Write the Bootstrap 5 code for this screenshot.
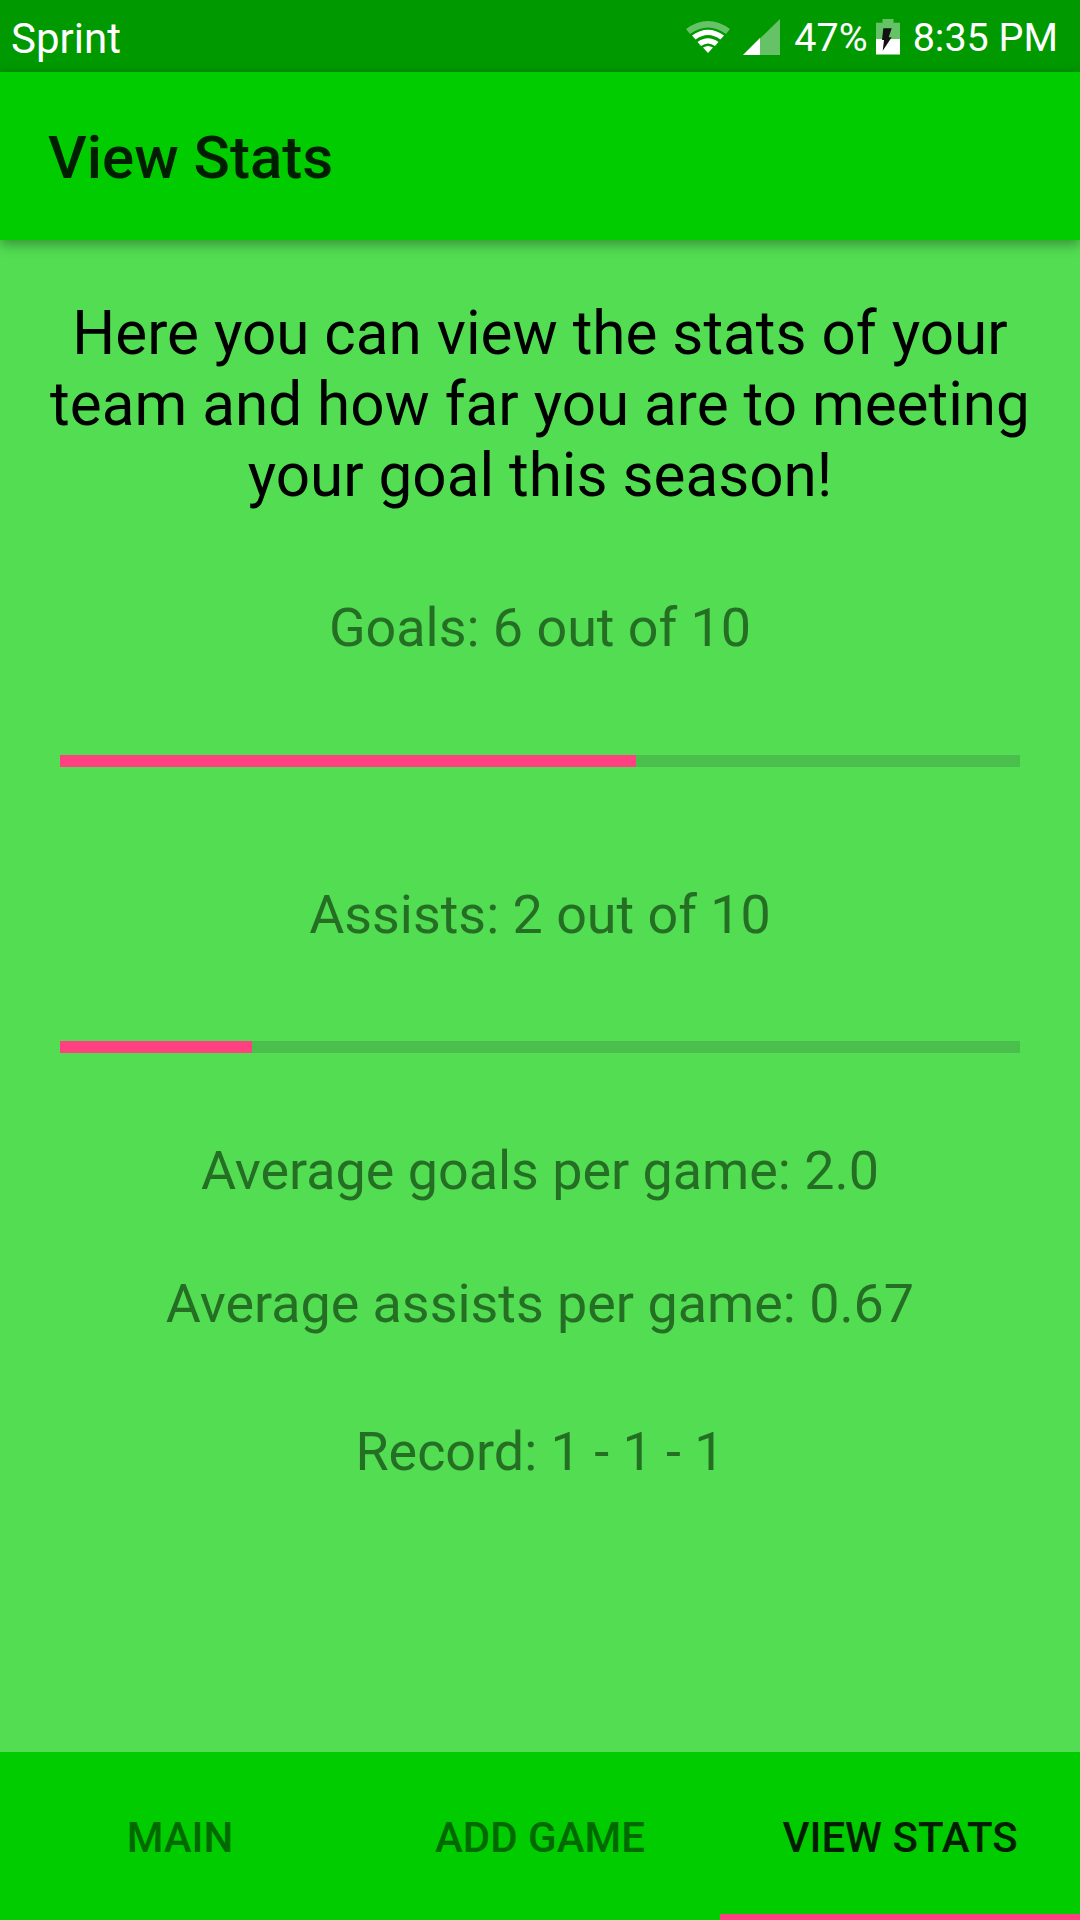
<!DOCTYPE html>
<html lang="en">
<head>
  <meta charset="UTF-8" />
  <meta name="viewport" content="width=device-width, initial-scale=1" />
  <title>View Stats</title>
  <link href="https://cdn.jsdelivr.net/npm/bootstrap@5.3.0/dist/css/bootstrap.min.css" rel="stylesheet">
  <style>
    body {
      background: #52dd52;
      font-family: Roboto, sans-serif;
      height: 1920px;
      overflow: hidden;
    }

    .status-bar {
      height: 72px;
      background: #009900;
      color: #fff;
      padding: 4px 22px 0 11px;
    }

    .carrier {
      font-size: 42px;
    }

    .status-right {
      font-size: 39.5px;
    }

    .wifi-icon { margin-right: 13px; margin-top: -3px; }
    .signal-icon { margin-right: 14px; margin-top: -3px; }
    .battery-icon { margin: -3px 13px 0 8px; }

    .app-bar {
      height: 168px;
      background: #00cc00;
      color: #001f00;
      font-size: 60px;
      font-weight: 500;
      padding: 4px 0 0 48px;
      box-shadow: 0 4px 12px rgba(0, 0, 0, 0.35);
      position: relative;
    }

    .stats-body {
      flex: 1;
      padding-top: 58px;
    }

    .intro-text {
      font-size: 60.2px;
      line-height: 71px;
      color: #000;
      margin: 0 0 85px;
      padding: 0 30px;
    }

    .stat-text {
      font-size: 53.85px;
      line-height: 64px;
      color: #256f25;
      margin: 0;
    }

    .stat-bar {
      height: 12px;
      margin: 95px 60px 0;
      background: #4bbf4b;
      border-radius: 0;
    }

    .stat-bar .progress-bar {
      background: #ff4081;
    }

    .stat-bar-second { margin-top: 94px; }
    .stat-second { margin-top: 116px; }
    .stat-avg { margin-top: 86px; }
    .stat-avg2 { margin-top: 69px; }
    .stat-rec { margin-top: 84px; }

    .tab-bar {
      height: 168px;
      background: #00cc00;
    }

    .tab-item {
      width: 360px;
      font-size: 42px;
      font-weight: 500;
      color: #006a00;
      padding-top: 2px;
    }

    .tab-active {
      color: #001f00;
      border-bottom: 6px solid #ff4081;
      padding-top: 8px;
    }
  </style>
</head>
<body class="d-flex flex-column">

  <div class="status-bar d-flex justify-content-between align-items-center">
    <span class="carrier">Sprint</span>
    <div class="status-right d-flex align-items-center">
      <svg class="wifi-icon" width="44" height="34" viewBox="0 0 44 34">
        <path d="M0 9 Q22 -7 44 9 L40 14 Q22 1 4 14Z" fill="#fff" opacity=".4"/>
        <path d="M6 15.500 Q22 4 38 15.500 L34.500 19.500 Q22 10.500 9.500 19.500Z" fill="#fff"/>
        <path d="M11.500 22 Q22 14.500 32.500 22 L29 26 Q22 21 15 26Z" fill="#fff"/>
        <path d="M17 27.500 Q22 24.500 27 27.500 L22 33Z" fill="#fff"/>
      </svg>
      <svg class="signal-icon" width="37" height="36" viewBox="0 0 37 36">
        <path d="M37 0V36H0Z" fill="#fff" opacity=".4"/>
        <path d="M17 19V36H0Z" fill="#fff"/>
      </svg>
      <span>47%</span>
      <svg class="battery-icon" width="24" height="36" viewBox="0 0 24 36">
        <path d="M6.500 0H17.500V3.700H24V20H0V3.700H6.500Z" fill="#fff" opacity=".4"/>
        <path d="M0 20H24V35.500H0Z" fill="#fff"/>
        <path d="M7.300 9.300H15.700L12.700 18.300H15.700L6.700 31.700L8 21H6Z" fill="#111"/>
      </svg>
      <span>8:35 PM</span>
    </div>
  </div>

  <div class="app-bar d-flex align-items-center">View Stats</div>

  <main class="stats-body text-center">
    <p class="intro-text">Here you can view the stats of your team and how far you are to meeting your goal this season!</p>

    <p class="stat-text">Goals: 6 out of 10</p>
    <div class="progress stat-bar">
      <div class="progress-bar" style="width: 60%"></div>
    </div>

    <p class="stat-text stat-second">Assists: 2 out of 10</p>
    <div class="progress stat-bar stat-bar-second">
      <div class="progress-bar" style="width: 20%"></div>
    </div>

    <p class="stat-text stat-avg">Average goals per game: 2.0</p>
    <p class="stat-text stat-avg2">Average assists per game: 0.67</p>
    <p class="stat-text stat-rec">Record: 1 - 1 - 1</p>
  </main>

  <nav class="tab-bar d-flex">
    <div class="tab-item d-flex align-items-center justify-content-center">MAIN</div>
    <div class="tab-item d-flex align-items-center justify-content-center">ADD GAME</div>
    <div class="tab-item tab-active d-flex align-items-center justify-content-center">VIEW STATS</div>
  </nav>

  <script src="https://cdn.jsdelivr.net/npm/bootstrap@5.3.0/dist/js/bootstrap.bundle.min.js"></script>
</body>
</html>
